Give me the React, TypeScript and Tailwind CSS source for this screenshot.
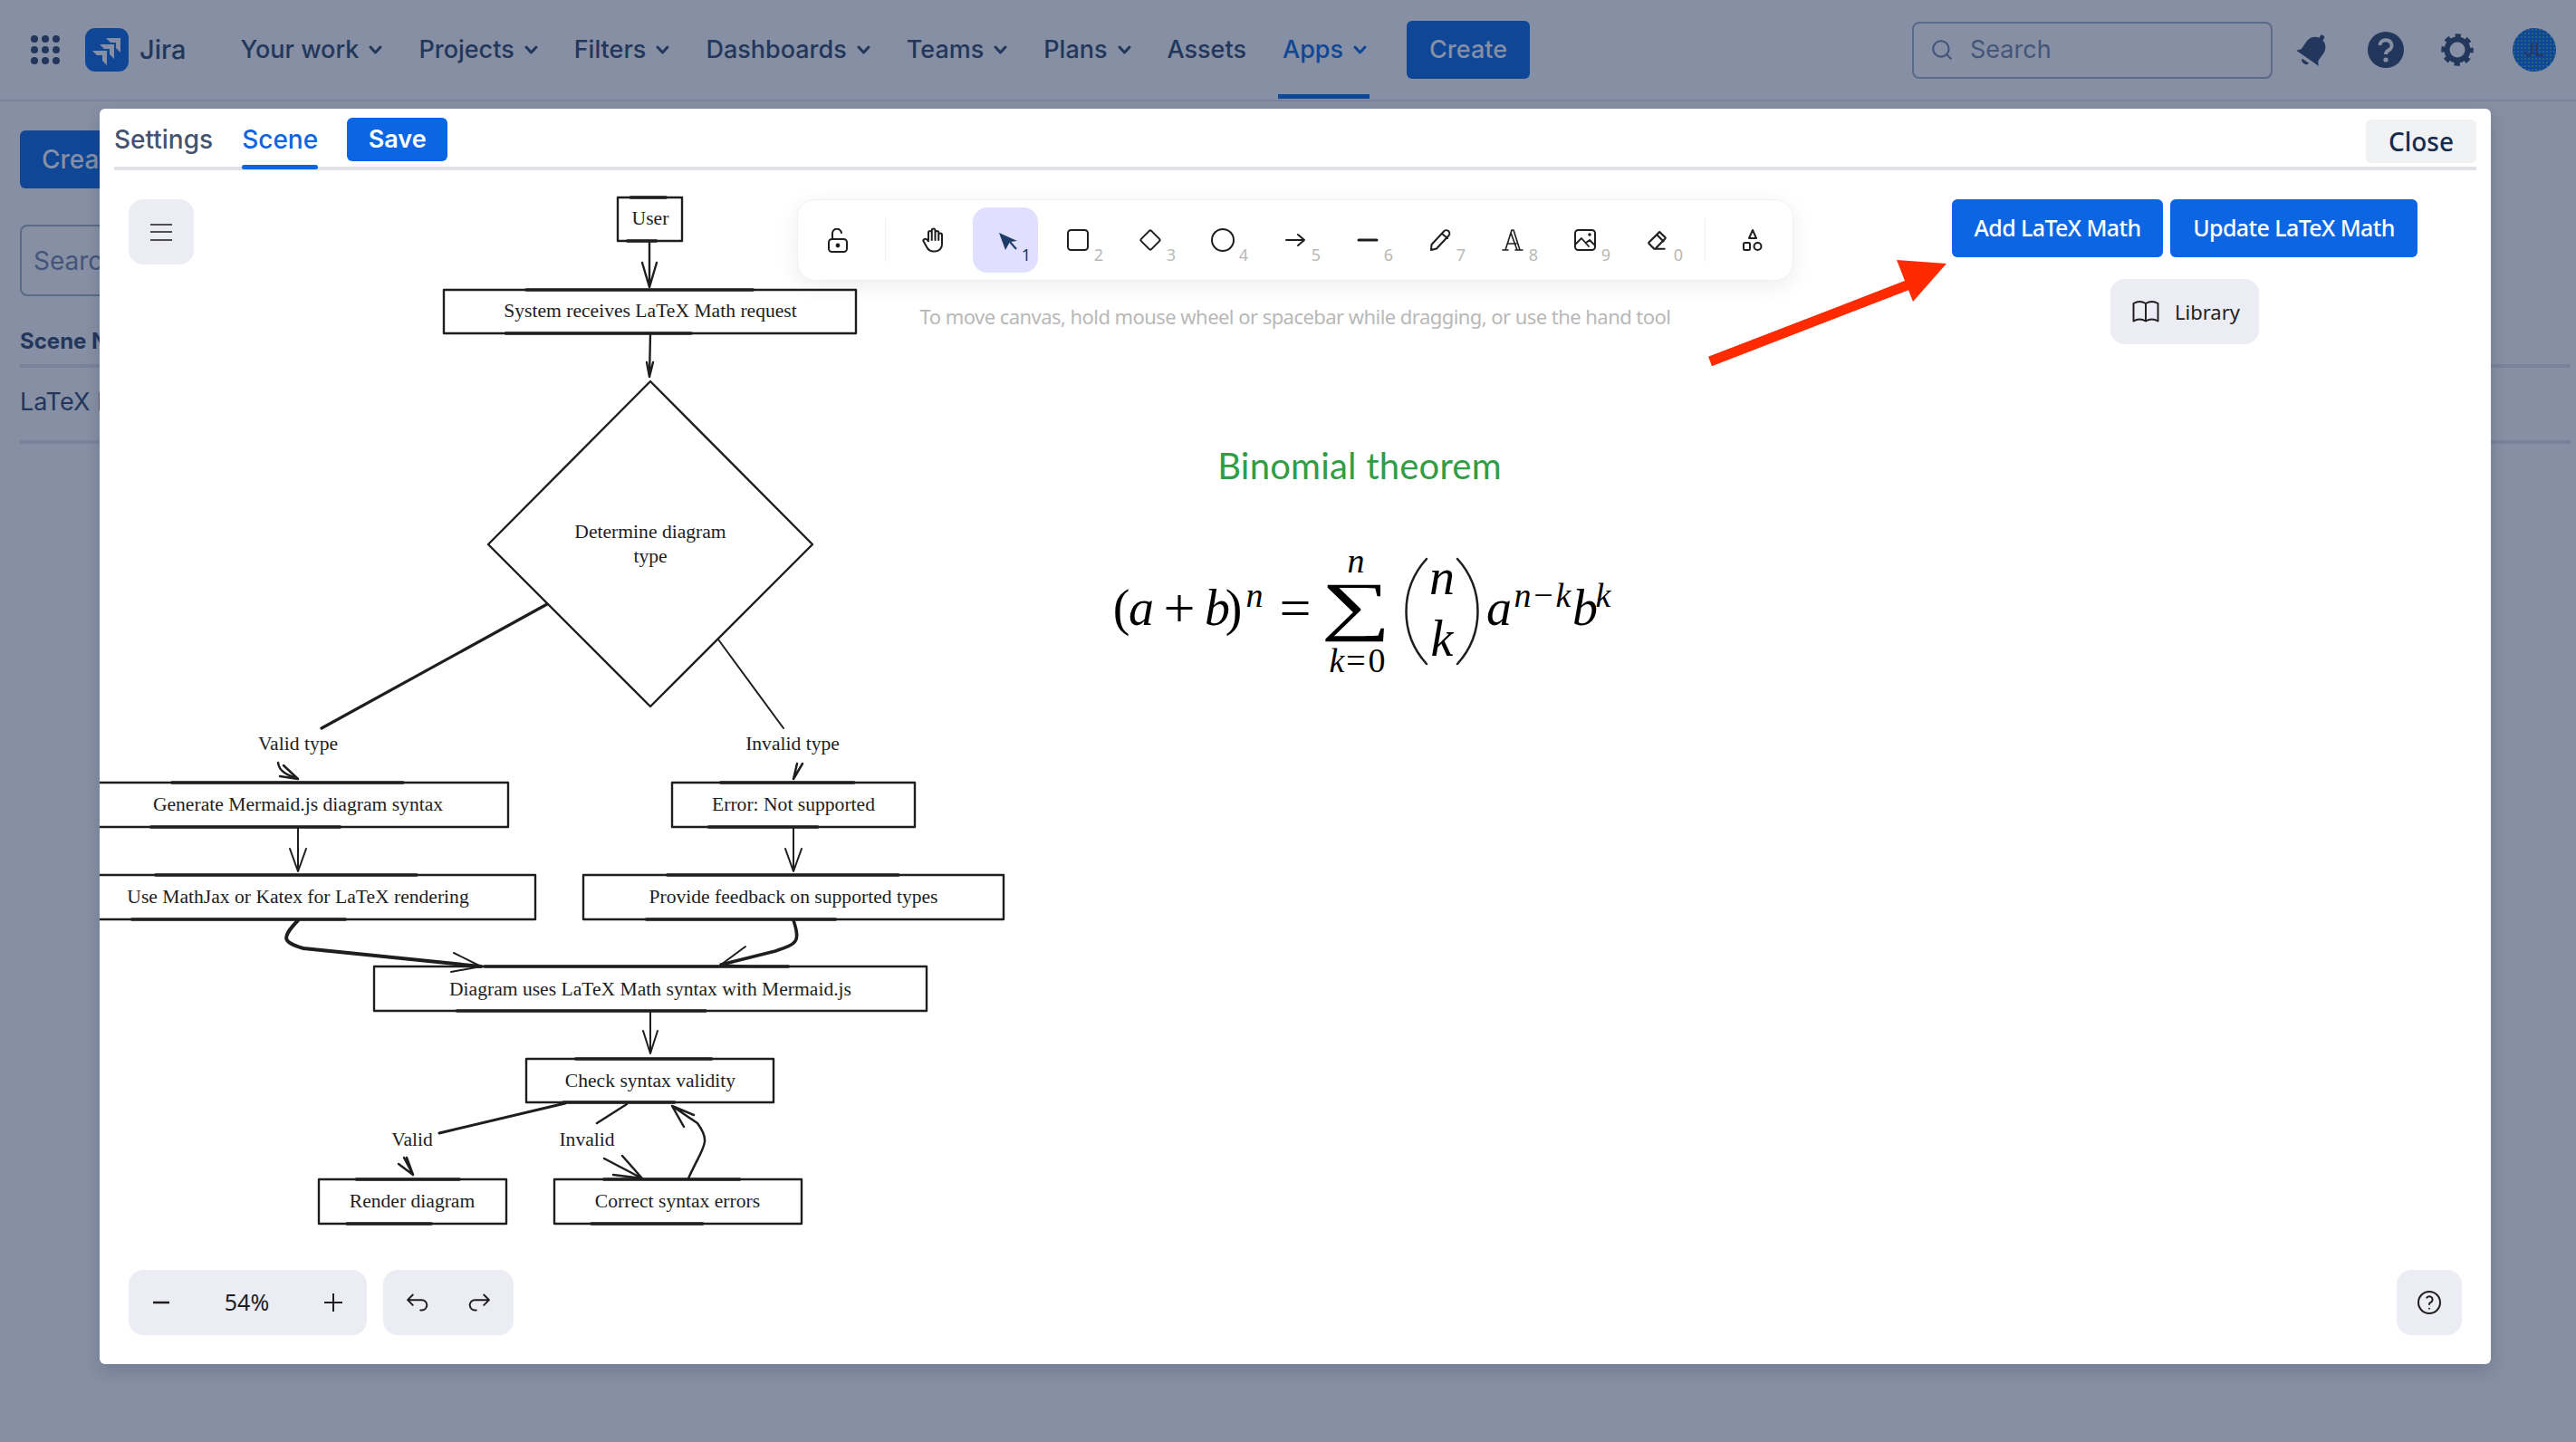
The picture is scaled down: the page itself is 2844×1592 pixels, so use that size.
import { Search } from 'lucide-react';

const navItems = [
  { label: 'Your work', menu: true },
  { label: 'Projects', menu: true },
  { label: 'Filters', menu: true },
  { label: 'Dashboards', menu: true },
  { label: 'Teams', menu: true },
  { label: 'Plans', menu: true },
  { label: 'Assets', menu: false },
  { label: 'Apps', menu: true, active: true },
];

// diagram geometry, in page pixels
const boxes = [
  [682, 218, 71, 48],
  [490, 320, 455, 48],
  [97, 864, 464, 49],
  [742, 864, 268, 49],
  [67, 966, 524, 49],
  [644, 966, 464, 49],
  [413, 1067, 610, 49],
  [581, 1169, 273, 48],
  [352, 1302, 207, 49],
  [612, 1302, 273, 49],
];

const labels = [
  { text: 'User', x: 718, y: 241 },
  { text: 'System receives LaTeX Math request', x: 718, y: 343 },
  { text: 'Determine diagram', x: 718, y: 587 },
  { text: 'type', x: 718, y: 614 },
  { text: 'Valid type', x: 329, y: 821 },
  { text: 'Invalid type', x: 875, y: 821 },
  { text: 'Generate Mermaid.js diagram syntax', x: 329, y: 888 },
  { text: 'Error: Not supported', x: 876, y: 888 },
  { text: 'Use MathJax or Katex for LaTeX rendering', x: 329, y: 990 },
  { text: 'Provide feedback on supported types', x: 876, y: 990 },
  { text: 'Diagram uses LaTeX Math syntax with Mermaid.js', x: 718, y: 1092 },
  { text: 'Check syntax validity', x: 718, y: 1193 },
  { text: 'Valid', x: 455, y: 1258 },
  { text: 'Invalid', x: 648, y: 1258 },
  { text: 'Render diagram', x: 455, y: 1326 },
  { text: 'Correct syntax errors', x: 748, y: 1326 },
];

const mathGlyphs = [
  { t: '(', x: 1238, b: 687, fs: 56 },
  { t: 'a', x: 1260, b: 687, fs: 56, it: true },
  { t: '+', x: 1302, b: 689, fs: 62 },
  { t: 'b', x: 1344, b: 687, fs: 56, it: true },
  { t: ')', x: 1362, b: 687, fs: 56 },
  { t: 'n', x: 1385, b: 667, fs: 38, it: true },
  { t: '=', x: 1430, b: 689, fs: 62 },
  { t: 'n', x: 1497, b: 629, fs: 38, it: true },
  { t: 'k', x: 1476, b: 739, fs: 38, it: true },
  { t: '=', x: 1497, b: 739, fs: 38 },
  { t: '0', x: 1520, b: 739, fs: 38 },
  { t: 'n', x: 1592, b: 653, fs: 56, it: true },
  { t: 'k', x: 1592, b: 721, fs: 56, it: true },
  { t: 'a', x: 1655, b: 687, fs: 56, it: true },
  { t: 'n', x: 1681, b: 667, fs: 38, it: true },
  { t: '−', x: 1704, b: 667, fs: 38 },
  { t: 'k', x: 1726, b: 667, fs: 38, it: true },
  { t: 'b', x: 1750, b: 687, fs: 56, it: true },
  { t: 'k', x: 1770, b: 667, fs: 38, it: true },
];

function Chevron() {
  return (
    <svg width="15" height="12" viewBox="0 0 15 12" fill="none" stroke="currentColor" strokeWidth="3" strokeLinecap="round" strokeLinejoin="round">
      <path d="M2 3 L7.5 9 L13 3" />
    </svg>
  );
}

function Grid() {
  const dots = [38, 50, 62];
  return (
    <svg width="34" height="34" viewBox="33 38 34 34" fill="#22375b">
      {dots.map((y) => dots.map((x) => <circle key={`${x}-${y}`} cx={x} cy={y + 5} r="4" />))}
    </svg>
  );
}

function JiraLogo() {
  return (
    <svg width="48" height="48" viewBox="0 0 48 48">
      <rect width="48" height="48" rx="11" fill="#0f4796" />
      <g fill="#868fa3">
        <path d="M23 11 H39 V27 L34 22 V16 H28 Z" />
        <path d="M16 18 H32 V34 L27 29 V23 H21 Z" />
        <path d="M8 25 H24 V41 L19 36 V30 H13 Z" />
      </g>
    </svg>
  );
}

function HeaderIcons() {
  return (
    <div className="flex items-center">
      <svg width="42" height="42" viewBox="0 0 24 24" fill="#22375b" className="ml-6">
        <g transform="rotate(35 12 12)">
          <path d="M5.5 16 V10 a6.5 6.5 0 0 1 13 0 v6 l2 2.5 H3.5 Z" />
          <rect x="10.5" y="1" width="3" height="3" rx="1.5" />
          <path d="M9.5 20.5 h5 a2.5 2 0 0 1 -5 0 Z" />
        </g>
      </svg>
      <svg width="40" height="40" viewBox="0 0 40 40" className="ml-[39px]">
        <circle cx="20" cy="20" r="20" fill="#22375b" />
        <path d="M13.5 15 a6.5 6 0 1 1 9.5 5.5 c-2 1.2 -3 2.2 -3 4.5" fill="none" stroke="#868fa3" strokeWidth="4" />
        <circle cx="20" cy="31" r="2.6" fill="#868fa3" />
      </svg>
      <svg width="36" height="36" viewBox="0 0 36 36" fill="none" stroke="#22375b" className="ml-[41px]">
        <circle cx="18" cy="18" r="11.5" strokeWidth="6" />
        <circle cx="18" cy="18" r="15.5" strokeWidth="4.5" strokeDasharray="6.2 6" strokeDashoffset="3" />
      </svg>
      <div className="relative ml-[43px] flex h-12 w-12 items-center justify-center overflow-hidden rounded-full bg-[#0f4796] text-[20px] text-[#2a3558]">
        <svg width="48" height="48" className="absolute inset-0">
          <defs>
            <pattern id="dots" width="4" height="4" patternUnits="userSpaceOnUse">
              <circle cx="2" cy="2" r="0.7" fill="#3f9a5c" />
            </pattern>
          </defs>
          <rect width="48" height="48" fill="url(#dots)" />
        </svg>
        <span className="relative">JL</span>
      </div>
    </div>
  );
}

function JiraHeader() {
  return (
    <header className="relative flex h-[112px] items-center border-b-2 border-[#77829a] pl-[33px] text-[#22375b]">
      <Grid />
      <div className="ml-[27px]"><JiraLogo /></div>
      <span className="ml-3 text-[29px] font-medium">Jira</span>
      <nav className="ml-[60px] flex items-center gap-10 text-[27px] font-medium">
        {navItems.map((item) => (
          <div key={item.label} className={`relative flex items-center gap-[11px] ${item.active ? 'text-[#0f4796]' : ''}`}>
            {item.label}
            {item.menu && <Chevron />}
            {item.active && <span className="absolute -left-[5px] -right-[3px] top-[69px] h-[5px] bg-[#0f4796]" />}
          </div>
        ))}
        <div className="ml-1 flex h-16 w-[136px] items-center justify-center rounded-md bg-[#0f4796] text-[#868fa3]">Create</div>
      </nav>
      <div className="ml-auto flex items-center pr-[22px]">
        <div className="flex h-[63px] w-[398px] items-center gap-[18px] rounded-lg border-2 border-[#5a6a89] pl-[18px] text-[27px] text-[#44557a]">
          <Search size={26} strokeWidth={2} />
          Search
        </div>
        <HeaderIcons />
      </div>
    </header>
  );
}

function BackPage() {
  return (
    <div className="px-[22px] pt-[32px] text-[#22375b]">
      <div className="flex h-16 w-[220px] items-center rounded-md bg-[#0f4796] pl-6 text-[28px] font-medium text-[#868fa3]">Create</div>
      <div className="mt-10 flex h-[79px] w-[400px] items-center rounded-lg border-2 border-[#5a6a89] pl-[13px] text-[28px] text-[#44557a]">Search</div>
      <div className="mt-[29px] -mr-4 flex h-[50px] items-center border-b-4 border-[#78839a] pb-1 text-[24px] font-bold">Scene Name</div>
      <div className="-mr-4 flex h-[84px] items-center border-b-4 border-[#78839a] pb-1 text-[27px]">LaTeX Math</div>
    </div>
  );
}

function Flowchart() {
  return (
    <div className="absolute left-[-110px] top-[-188px] h-[1592px] w-[2844px] font-['Liberation_Serif',serif] text-[21.6px] text-[#1e1e1e]">
      <svg width="2844" height="1592" className="absolute inset-0" fill="none" stroke="#1e1e1e" strokeWidth="2" strokeLinecap="round" strokeLinejoin="round">
        {boxes.map(([x, y, w, h]) => (
          <g key={`${x}-${y}`}>
            <rect x={x} y={y} width={w} height={h} strokeWidth="2.4" />
            <path d={`M${x + w * 0.2} ${y} H${x + w * 0.75} M${x + w * 0.15} ${y + h} H${x + w * 0.6}`} strokeWidth="3.5" />
          </g>
        ))}

        {/* diamond */}
        <path d="M718 421 L897 601 L718 780 L539 601 Z" strokeWidth="2.4" />

        {/* connectors */}
        <path d="M717 266 V317 M709 290 L717 317 L725 290" strokeWidth="2.4" />
        <path d="M718 368 L717 416 M714 400 L717 416 L721 400" strokeWidth="2.4" />
        <path d="M604 667 L355 804" strokeWidth="3.2" />
        <path d="M793 706 L865 804" />
        <path d="M307 842 C308 852 318 856 329 860 M309 857 L329 860 M313 845 L329 860" strokeWidth="2.5" />
        <path d="M886 843 L876 860 M880 843 L876 860" strokeWidth="2.5" />
        <path d="M329 913 V962 M320 937 L329 962 L338 937" />
        <path d="M876 913 V962 M867 937 L876 962 L885 937" />
        <path d="M329 1016 C310 1036 312 1040 335 1047 L531 1067" strokeWidth="4" />
        <path d="M501 1052 L531 1067 L498 1073" />
        <path d="M876 1016 C884 1040 880 1042 856 1050 L796 1065" strokeWidth="3.5" />
        <path d="M823 1045 L796 1065 L829 1067" />
        <path d="M718 1116 V1163 M710 1138 L718 1163 L726 1138" />
        <path d="M624 1218 L485 1251" strokeWidth="3" />
        <path d="M692 1219 L659 1240" strokeWidth="2.5" />
        <path d="M446 1278 L456 1297 M440 1285 L456 1297 M449 1278 L456 1297" strokeWidth="2.5" />
        <path d="M667 1279 L709 1301 M687 1276 L709 1301 M677 1297 L709 1301" strokeWidth="2.5" />
        <path d="M760 1301 C776 1265 786 1262 770 1240 L742 1221 M766 1231 L742 1221 L755 1244" strokeWidth="2.5" />

        {/* red callout arrow */}
        <path d="M1888 399 L2126 307" stroke="#ff2a00" strokeWidth="11" strokeLinecap="butt" />
        <path d="M2149 291 L2094 287 L2112 333 Z" fill="#ff2a00" stroke="none" />

        {/* big binomial brackets */}
        <path d="M1575 617 C1545 650 1545 700 1575 733" strokeWidth="2.5" />
        <path d="M1609 617 C1639 650 1639 700 1609 733" strokeWidth="2.5" />
      </svg>

      {labels.map((l) => (
        <div key={l.text} className="absolute -translate-x-1/2 -translate-y-1/2 whitespace-nowrap" style={{ left: l.x, top: l.y }}>
          {l.text}
        </div>
      ))}

      <div className="absolute left-[1501px] top-[514px] -translate-x-1/2 -translate-y-1/2 whitespace-nowrap font-['Lato',sans-serif] text-[40px] tracking-[0.2px] text-[#2f9e44]">
        Binomial theorem
      </div>

      <div className="text-black">
        {mathGlyphs.map((g, i) => (
          <span
            key={i}
            className={`absolute -translate-x-1/2 leading-none ${g.it ? 'italic' : ''}`}
            style={{ left: g.x, top: g.b + 3 - g.fs * 0.8375, fontSize: g.fs }}
          >
            {g.t}
          </span>
        ))}
        <span className="absolute left-[1497px] top-[633px] -translate-x-1/2 scale-x-150 text-[72px] leading-none">∑</span>
      </div>
    </div>
  );
}

function Tool({ digit, active, children }: { digit?: string; active?: boolean; children: React.ReactNode }) {
  return (
    <div className={`relative flex h-[72px] w-[72px] shrink-0 items-center justify-center rounded-2xl ${active ? 'bg-[#e0dfff]' : ''}`}>
      {children}
      {digit && <span className={`absolute bottom-[11px] right-[8px] text-[18px] leading-none ${active ? 'text-[#1e3a66]' : 'text-[#b8b8b8]'}`}>{digit}</span>}
    </div>
  );
}

function ToolIcon({ children, w = 24, h = 24 }: { children: React.ReactNode; w?: number; h?: number }) {
  return (
    <svg width={w} height={h} viewBox={`0 0 ${w} ${h}`} fill="none" stroke="#1e1e1e" strokeWidth="2" strokeLinecap="round" strokeLinejoin="round">
      {children}
    </svg>
  );
}

function Toolbar() {
  return (
    <div className="flex items-center rounded-[20px] border border-[#f0f0f3] bg-white p-2 shadow-[0_6px_24px_rgba(0,0,0,0.07)]">
      <Tool>
        <ToolIcon h={27}>
          <rect x="2" y="12" width="20" height="14" rx="3.5" />
          <path d="M6 12 V6.5 a5 5 0 0 1 10 -1.5" />
          <circle cx="12" cy="19" r="1.4" fill="#1e1e1e" />
        </ToolIcon>
      </Tool>
      <div className="mx-4 h-12 w-px bg-[#f0f0f3]" />
      <Tool>
        <svg width="30" height="30" viewBox="0 0 24 24" fill="none" stroke="#1e1e1e" strokeWidth="1.6" strokeLinecap="round" strokeLinejoin="round">
          <path d="M8 13v-7.5a1.5 1.5 0 0 1 3 0v6.5 M11 5.5v-2a1.5 1.5 0 1 1 3 0v8.5 M14 5.5a1.5 1.5 0 0 1 3 0v6.5 M17 7.5a1.5 1.5 0 0 1 3 0v8.5a6 6 0 0 1 -6 6h-2h.208a6 6 0 0 1 -5.012 -2.7a69.74 69.74 0 0 1 -.196 -.3c-.312 -.479 -1.407 -2.388 -3.286 -5.728a1.5 1.5 0 0 1 .536 -2.022a1.867 1.867 0 0 1 2.28 .28l1.47 1.47" />
        </svg>
      </Tool>
      <div className="ml-2">
        <Tool digit="1" active>
          <svg width="22" height="22" viewBox="0 0 22 22" className="translate-x-[3px] translate-y-[2px]">
            <path d="M1 1 L21 10 L13 11 L8 20 Z" fill="#1e3a66" />
            <path d="M13 11 L20 19" stroke="#1e3a66" strokeWidth="2" />
          </svg>
        </Tool>
      </div>
      <div className="ml-2">
        <Tool digit="2"><ToolIcon><rect x="1" y="1" width="22" height="22" rx="3.5" /></ToolIcon></Tool>
      </div>
      <div className="ml-2">
        <Tool digit="3">
          <ToolIcon w={26} h={26}><rect x="5" y="5" width="16" height="16" rx="2" transform="rotate(45 13 13)" /></ToolIcon>
        </Tool>
      </div>
      <div className="ml-2">
        <Tool digit="4"><ToolIcon w={26} h={26}><circle cx="13" cy="13" r="12" /></ToolIcon></Tool>
      </div>
      <div className="ml-2">
        <Tool digit="5"><ToolIcon><path d="M2 12 H22 M15 6 L22 12 L15 18" /></ToolIcon></Tool>
      </div>
      <div className="ml-2">
        <Tool digit="6"><ToolIcon><path d="M2 12 H22" strokeWidth="3" /></ToolIcon></Tool>
      </div>
      <div className="ml-2">
        <Tool digit="7">
          <ToolIcon><path d="M2 23 l.5 -6 L16 2.5 a2.8 2.8 0 0 1 5.5 4.5 L8 21.5 Z M14 5 l6 5" /></ToolIcon>
        </Tool>
      </div>
      <div className="ml-2">
        <Tool digit="8">
          <ToolIcon><path d="M1 23 H7 M15 23 H23 M4 23 L11 1 H13 L20 23 M7 16 H16 M10 4 L17 23" strokeWidth="1.6" /></ToolIcon>
        </Tool>
      </div>
      <div className="ml-2">
        <Tool digit="9">
          <ToolIcon>
            <rect x="1" y="1" width="22" height="22" rx="3.5" />
            <path d="M1 17 L8 10 L16 19 M13 15 L17 12 L23 18" strokeWidth="1.8" />
            <circle cx="17" cy="6" r="0.8" fill="#1e1e1e" />
          </ToolIcon>
        </Tool>
      </div>
      <div className="ml-2">
        <Tool digit="0">
          <svg width="26" height="26" viewBox="0 0 24 24" fill="none" stroke="#1e1e1e" strokeWidth="2" strokeLinecap="round" strokeLinejoin="round">
            <path d="M19 21h-10.5l-5.2 -5.3a1 1 0 0 1 0 -1.41l10 -10a1 1 0 0 1 1.41 0l5 5a1 1 0 0 1 0 1.41l-9.2 9.3 M18 13.3l-6.3 -6.3" />
          </svg>
        </Tool>
      </div>
      <div className="mx-4 h-12 w-px bg-[#f0f0f3]" />
      <Tool>
        <ToolIcon>
          <path d="M12 1 L16 10 H8 Z" />
          <rect x="2" y="15" width="7" height="8" rx="1.5" />
          <circle cx="17.5" cy="19" r="4" />
        </ToolIcon>
      </Tool>
    </div>
  );
}

function ExcalidrawUi() {
  return (
    <div className="absolute inset-0 flex flex-col justify-between p-8 font-['Noto_Sans',sans-serif] text-[#1e1e1e]">
      <div className="flex items-start">
        <button className="flex h-[72px] w-[72px] items-center justify-center rounded-2xl bg-[#ececf4]">
          <svg width="24" height="20" viewBox="0 0 24 20" stroke="#1b1b1f" strokeWidth="1.6"><path d="M0 2 H24 M0 10 H24 M0 19 H24" /></svg>
        </button>
        <div className="ml-[666px] flex w-[1100px] flex-col items-center">
          <Toolbar />
          <div className="mt-[27px] whitespace-nowrap text-[22px] leading-6 tracking-[-0.55px] text-[#b8b8b8]">
            To move canvas, hold mouse wheel or spacebar while dragging, or use the hand tool
          </div>
        </div>
        <div className="ml-[175px] flex flex-col items-center">
          <div className="flex gap-2 text-[25px] font-medium text-white">
            <button className="h-16 w-[233px] rounded-md bg-[#0c66e4] tracking-[-0.6px]">Add LaTeX Math</button>
            <button className="h-16 w-[273px] rounded-md bg-[#0c66e4] tracking-[-0.6px]">Update LaTeX Math</button>
          </div>
          <button className="mt-6 flex h-[72px] w-[164px] items-center justify-center gap-[14px] rounded-2xl bg-[#ececf4] text-[22px]">
            <svg width="36" height="36" viewBox="0 0 24 24" fill="none" stroke="#1e1e1e" strokeWidth="1.3" strokeLinecap="round" strokeLinejoin="round">
              <path d="M3 19a9 9 0 0 1 9 0a9 9 0 0 1 9 0 M3 6a9 9 0 0 1 9 0a9 9 0 0 1 9 0 M3 6l0 13 M12 6l0 13 M21 6l0 13" />
            </svg>
            Library
          </button>
        </div>
      </div>
      <div className="flex items-end">
        <div className="flex h-[72px] w-[263px] items-center justify-between rounded-2xl bg-[#ececf4] px-[26px] text-[25px]">
          <svg width="20" height="4" viewBox="0 0 20 4" stroke="#1e1e1e" strokeWidth="2.4"><path d="M1 2 H19" /></svg>
          54%
          <svg width="22" height="22" viewBox="0 0 22 22" stroke="#1e1e1e" strokeWidth="2"><path d="M1 11 H21 M11 1 V21" /></svg>
        </div>
        <div className="ml-[18px] flex h-[72px] w-[144px] items-center justify-center gap-9 rounded-2xl bg-[#ececf4]">
          <svg width="34" height="34" viewBox="0 0 24 24" fill="none" stroke="#1e1e1e" strokeWidth="1.4" strokeLinecap="round" strokeLinejoin="round">
            <path d="M9 14l-4 -4l4 -4 M5 10h11a4 4 0 1 1 0 8h-1" />
          </svg>
          <svg width="34" height="34" viewBox="0 0 24 24" fill="none" stroke="#1e1e1e" strokeWidth="1.4" strokeLinecap="round" strokeLinejoin="round">
            <path d="M15 14l4 -4l-4 -4 M19 10h-11a4 4 0 1 0 0 8h1" />
          </svg>
        </div>
        <button className="ml-auto flex h-[72px] w-[72px] items-center justify-center rounded-2xl bg-[#ececf4]">
          <svg width="32" height="32" viewBox="0 0 24 24" fill="none" stroke="#1e1e1e" strokeWidth="1.5" strokeLinecap="round" strokeLinejoin="round">
            <circle cx="12" cy="12" r="9" />
            <path d="M12 17v.01 M12 13.5a1.5 1.5 0 0 1 1 -1.5a2.6 2.6 0 1 0 -3 -4" />
          </svg>
        </button>
      </div>
    </div>
  );
}

export default function App() {
  return (
    <div className="relative h-[1592px] w-[2844px] overflow-hidden bg-[#868fa3] font-['Inter',sans-serif]">
      <JiraHeader />
      <BackPage />

      {/* modal */}
      <div className="absolute left-[110px] top-[120px] flex h-[1386px] w-[2640px] flex-col rounded-md bg-white shadow-[0_8px_18px_rgba(9,30,66,0.16)]">
        <div className="ml-4 mr-4 flex h-[68px] shrink-0 items-center gap-8 border-b-4 border-[#dfe1e6] pt-1 text-[28px] font-medium">
          <span className="text-[#44546f]">Settings</span>
          <span className="relative flex items-center self-stretch text-[#0c66e4]">
            Scene
            <span className="absolute inset-x-0 -bottom-[3px] h-[5px] rounded-sm bg-[#0c66e4]" />
          </span>
          <button className="flex h-12 w-[111px] items-center justify-center rounded-md bg-[#0c66e4] text-[27px] font-semibold text-white">Save</button>
          <button className="ml-auto mt-1 flex h-12 w-[122px] items-center justify-center rounded-md bg-[#f1f2f4] font-['Noto_Sans',sans-serif] text-[#172b4d]">Close</button>
        </div>
        <div className="relative flex-1 overflow-hidden rounded-b-md">
          <Flowchart />
          <ExcalidrawUi />
        </div>
      </div>
    </div>
  );
}
